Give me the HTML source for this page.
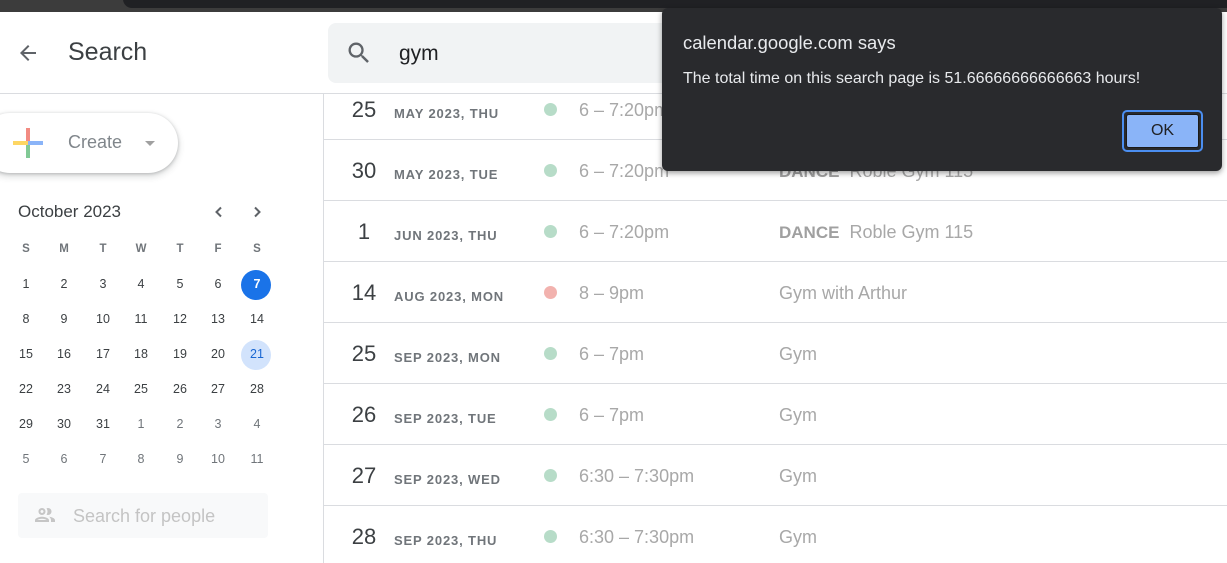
<!DOCTYPE html>
<html><head><meta charset="utf-8"><style>
*{margin:0;padding:0;box-sizing:border-box}
body{width:1227px;height:563px;overflow:hidden;background:#fff;font-family:"Liberation Sans",Arial,sans-serif;position:relative}
.a{position:absolute;white-space:nowrap}
.top{left:0;top:0;width:1227px;height:12px;background:#3c3c3c}
.tab{left:123px;top:-10px;width:1200px;height:18px;background:#202124;border-radius:10px}
.hline{left:0;top:93px;width:1227px;height:1px;background:#dadce0}
.vline{left:323px;top:94px;width:1px;height:469px;background:#dadce0}
.cal{font-size:12.5px;color:#3c4043;width:30px;text-align:center;transform:translateX(-50%)}
.dim{color:#70757a}
.row{left:324px;width:903px;height:1px;background:#dadce0}
.dn{font-size:22px;color:#3c4043;width:50px;text-align:center}
.dl{font-size:13px;font-weight:bold;color:#70757a;letter-spacing:0.85px}
.dot{width:13px;height:13px;border-radius:50%;background:#b7dcc8}
.tm{font-size:18px;color:#a8a8a8}
.ti{font-size:18px;color:#a8a8a8}
</style></head><body>
<div class="a top"></div><div class="a tab"></div>
<div class="a hline"></div><div class="a vline"></div>

<svg class="a" style="left:16px;top:41px" width="24" height="24" viewBox="0 0 24 24"><path d="M20 11H7.83l5.59-5.59L12 4l-8 8 8 8 1.41-1.41L7.83 13H20v-2z" fill="#5f6368"/></svg>
<div class="a" style="left:68px;top:38px;font-size:25px;color:#3c4043">Search</div>
<div class="a" style="left:328px;top:23px;width:340px;height:60px;background:#f1f3f4;border-radius:8px 0 0 8px"></div>
<svg class="a" style="left:345px;top:39px" width="28" height="28" viewBox="0 0 24 24"><path d="M15.5 14h-.79l-.28-.27A6.47 6.47 0 0 0 16 9.5 6.5 6.5 0 1 0 9.5 16c1.61 0 3.09-.59 4.23-1.57l.27.28v.79l5 4.99L20.49 19l-4.99-5zm-6 0C7.01 14 5 11.99 5 9.5S7.01 5 9.5 5 14 7.01 14 9.5 11.99 14 9.5 14z" fill="#5f6368"/></svg>
<div class="a" style="left:399px;top:42px;font-size:21px;color:#202124">gym</div>

<div class="a" style="left:-20px;top:113px;width:198px;height:60px;border-radius:30px;background:#fff;box-shadow:0 1px 3px rgba(60,64,67,.3),0 3px 6px 2px rgba(60,64,67,.12)"></div>
<div class="a" style="left:26px;top:128px;width:4px;height:15px;background:#f28b82"></div>
<div class="a" style="left:26px;top:143px;width:4px;height:15px;background:#81c995"></div>
<div class="a" style="left:13px;top:141px;width:15px;height:4px;background:#fdd663"></div>
<div class="a" style="left:28px;top:141px;width:15px;height:4px;background:#8ab4f8"></div>
<div class="a" style="left:68px;top:132px;font-size:18px;color:#80868b">Create</div>
<div class="a" style="left:145px;top:141px;width:0;height:0;border-left:5px solid transparent;border-right:5px solid transparent;border-top:5px solid #a0a0a0"></div>

<div class="a" style="left:18px;top:202px;font-size:17px;color:#3c4043">October 2023</div>
<svg class="a" style="left:211px;top:204px" width="16" height="16" viewBox="0 0 16 16"><path d="M10 3.5 5.5 8 10 12.5" stroke="#5f6368" stroke-width="2" fill="none"/></svg>
<svg class="a" style="left:249px;top:204px" width="16" height="16" viewBox="0 0 16 16"><path d="M6 3.5 10.5 8 6 12.5" stroke="#5f6368" stroke-width="2" fill="none"/></svg>

<div class="a" style="left:241px;top:270px;width:30px;height:30px;border-radius:50%;background:#1a73e8"></div>
<div class="a" style="left:241px;top:340px;width:30px;height:30px;border-radius:50%;background:#d2e3fc"></div>

<div id="cal"></div>

<div class="a" style="left:18px;top:493px;width:250px;height:45px;background:#f8f9fa;border-radius:4px"></div>
<svg class="a" style="left:33px;top:503px" width="24" height="24" viewBox="0 0 24 24"><path d="M9 13.75c-2.34 0-7 1.170-7 3.5V19h14v-1.75c0-2.33-4.66-3.5-7-3.5zM4.34 17c.84-.58 2.870-1.25 4.66-1.25s3.82.67 4.66 1.25H4.34zM9 12c1.93 0 3.5-1.57 3.5-3.5S10.93 5 9 5 5.5 6.57 5.5 8.5 7.07 12 9 12zm0-5c.83 0 1.5.67 1.5 1.5S9.83 10 9 10s-1.5-.67-1.5-1.5S8.17 7 9 7zm7.04 6.81c1.16.84 1.96 1.96 1.96 3.44V19h4v-1.75c0-2.02-3.5-3.17-5.96-3.44zM15 12c1.93 0 3.5-1.57 3.5-3.5S16.93 5 15 5c-.54 0-1.04.13-1.5.35.63.89 1 1.98 1 3.15s-.37 2.26-1 3.15c.46.22.96.35 1.5.35z" fill="#c6c6c6"/></svg>
<div class="a" style="left:73px;top:506px;font-size:18px;color:#c4c4c4">Search for people</div>

<div id="rows"></div>

<div class="a" style="left:662px;top:8px;width:560px;height:163px;background:#292a2d;border-radius:6px;box-shadow:0 2px 6px rgba(0,0,0,.4)"></div>
<div class="a" style="left:683px;top:32px;font-size:18.4px;color:#e8eaed">calendar.google.com says</div>
<div class="a" style="left:683px;top:70px;font-size:16px;color:#e8eaed">The total time on this search page is 51.66666666666663 hours!</div>
<div class="a" style="left:1122px;top:110px;width:81px;height:42px;border:2px solid #4b8ef0;border-radius:5px;padding:2px"><div style="width:100%;height:100%;background:#8ab4f8;border-radius:3px;border:1px solid #1a1a1a;font-size:16px;color:#202124;text-align:center;line-height:32px">OK</div></div>

<script>
var h='',xs=[26,64,103,141,180,218,257];
'SMTWTFS'.split('').forEach(function(d,i){h+='<div class="a cal dim" style="left:'+xs[i]+'px;top:243px;font-size:11.5px;font-weight:bold">'+d+'</div>'});
var days=[1,2,3,4,5,6,7,8,9,10,11,12,13,14,15,16,17,18,19,20,21,22,23,24,25,26,27,28,29,30,31,1,2,3,4,5,6,7,8,9,10,11];
days.forEach(function(d,i){var r=Math.floor(i/7),c=i%7,y=277+r*35;
h+='<div class="a cal'+(i>=31?' dim':'')+'" style="left:'+xs[c]+'px;top:'+y+'px;'+(i==6?'color:#fff;font-weight:bold;':'')+(i==20?'color:#1967d2;':'')+'">'+d+'</div>'});
document.getElementById('cal').innerHTML=h;
var R=[['25','MAY 2023, THU','6 – 7:20pm','',0],['30','MAY 2023, TUE','6 – 7:20pm','<b>DANCE</b>&nbsp; Roble Gym 115',0],['1','JUN 2023, THU','6 – 7:20pm','<b>DANCE</b>&nbsp; Roble Gym 115',0],['14','AUG 2023, MON','8 – 9pm','Gym with Arthur',1],['25','SEP 2023, MON','6 – 7pm','Gym',0],['26','SEP 2023, TUE','6 – 7pm','Gym',0],['27','SEP 2023, WED','6:30 – 7:30pm','Gym',0],['28','SEP 2023, THU','6:30 – 7:30pm','Gym',0]];
var g='';R.forEach(function(r,i){var c=110+i*61;
if(i>0)g+='<div class="a row" style="top:'+(c-32)+'px"></div>';
g+='<div class="a dn" style="left:339px;top:'+(c-13)+'px">'+r[0]+'</div>';
g+='<div class="a dl" style="left:394px;top:'+(c-4)+'px">'+r[1]+'</div>';
g+='<div class="a dot" style="left:544px;top:'+(c-7)+'px;'+(r[4]?'background:#f2b2ae':'')+'"></div>';
g+='<div class="a tm" style="left:579px;top:'+(c-10)+'px">'+r[2]+'</div>';
g+='<div class="a ti" style="left:779px;top:'+(c-10)+'px">'+r[3].replace(/<b>/g,'<b style="font-weight:bold;color:#a0a0a0;font-size:17px">')+'</div>';});
document.getElementById('rows').innerHTML=g;
</script>
</body></html>
